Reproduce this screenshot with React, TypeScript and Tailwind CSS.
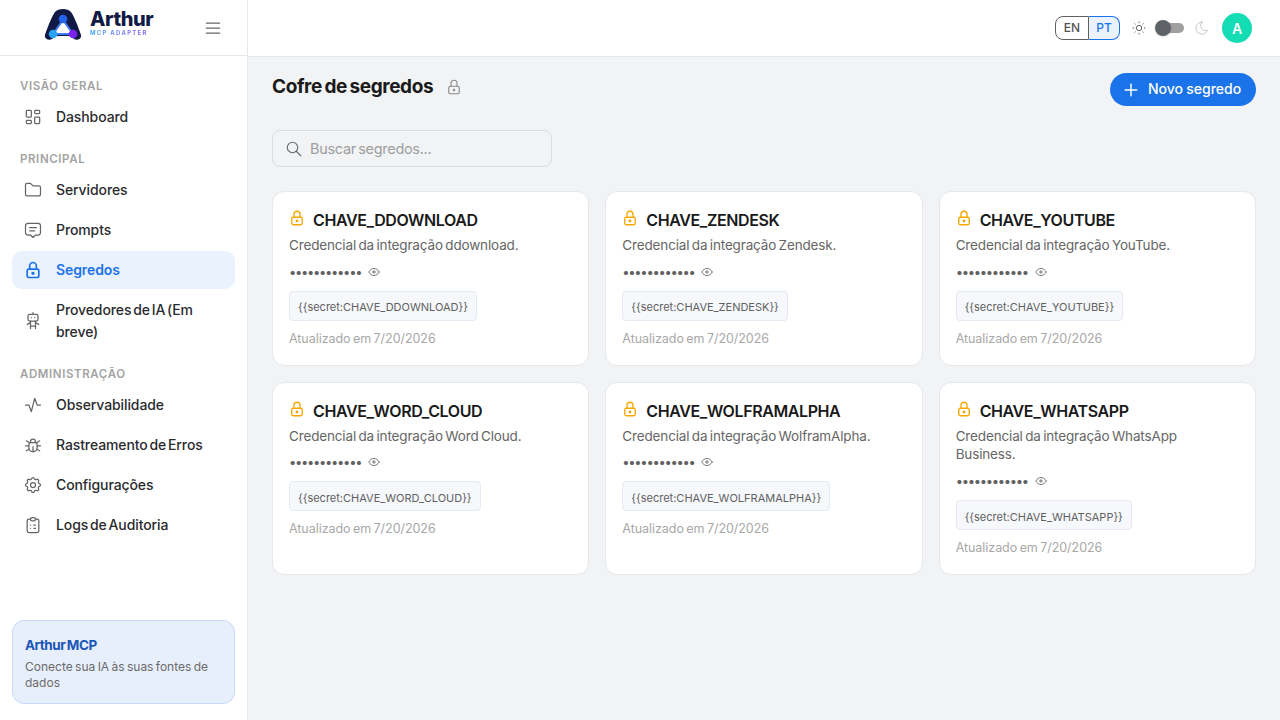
import { TbLayoutDashboard, TbFolder, TbMessage2, TbLock, TbRobot, TbActivity, TbBug, TbSettings, TbClipboardList, TbSun, TbMoon, TbEye, TbSearch, TbPlus, TbMenu2 } from "react-icons/tb";

const font = { fontFamily: "Inter, sans-serif" };

function Logo() {
  return (
    <div className="flex items-center gap-[8px]">
      <svg width="38" height="32" viewBox="0 0 38 32" className="-mt-[8px]">
        <path d="M1 27 C4 18 8 8 11 4 C14 0 24 0 27 4 C30 8 34 18 37 27 C38 31 33 33 30 31 L27 28 L11 28 L8 31 C5 33 0 31 1 27 Z" fill="#101a45" />
        <path d="M19 12 L9 26 L29 26 Z" fill="#ffffff" stroke="#3f7cf5" strokeWidth="2" strokeLinejoin="round" />
        <circle cx="19" cy="11" r="4.3" fill="#2563eb" />
        <circle cx="9" cy="26" r="4.3" fill="#2aa3f5" />
        <circle cx="29" cy="26" r="4.3" fill="#7c22f0" />
      </svg>
      <div className="flex flex-col items-start -mt-[9px]">
        <span className="text-[20px] leading-[19px] font-extrabold text-[#101a45] tracking-[-0.4px]">Arthur</span>
        <span className="text-[6px] leading-[7px] font-bold tracking-[1.25px] bg-gradient-to-r from-[#38a5f5] to-[#8b5cf6] bg-clip-text text-transparent">MCP ADAPTER</span>
      </div>
    </div>
  );
}

function SectionLabel({ children }: { children: string }) {
  return <div className="px-2 h-[22px] flex items-center text-[11.5px] font-semibold tracking-[0.6px] text-[#a3a3a3] uppercase">{children}</div>;
}

function NavItem({ icon: Icon, label, active, tall }: { icon: any; label: string; active?: boolean; tall?: boolean }) {
  return (
    <div className={`flex items-center gap-[13px] px-[12px] rounded-[10px] ${tall ? "py-[8px]" : "h-[38px]"} ${active ? "bg-[#eaf2fe] text-[#1a73e8]" : "text-[#2b2b2e]"}`}>
      <Icon strokeWidth={active ? 2 : 1.5} className={`shrink-0 w-[20px] h-[20px] -ml-[1px] ${active ? "text-[#1a73e8]" : "text-[#666666]"}`} />
      <span className={`text-[14px] leading-[22px] tracking-[-0.1px] [word-spacing:-1.8px] ${active ? "font-semibold" : "[font-weight:450]"}`}>{label}</span>
    </div>
  );
}

const cards = [
  ["CHAVE_DDOWNLOAD", "Credencial da integração ddownload."],
  ["CHAVE_ZENDESK", "Credencial da integração Zendesk."],
  ["CHAVE_YOUTUBE", "Credencial da integração YouTube."],
  ["CHAVE_WORD_CLOUD", "Credencial da integração Word Cloud."],
  ["CHAVE_WOLFRAMALPHA", "Credencial da integração WolframAlpha."],
  ["CHAVE_WHATSAPP", "Credencial da integração WhatsApp Business."],
];

function Card({ name, desc }: { name: string; desc: string }) {
  return (
    <div className="bg-white border border-[#e5e7eb] rounded-[12px] pt-[16px] px-[16px] pb-[16.6px]">
      <div className="flex items-start gap-[7px] h-[24px]">
        <TbLock strokeWidth={1.75} className="w-[18px] h-[18px] text-[#f5a700] shrink-0 mt-[1px] -ml-[1px]" />
        <span className="text-[16px] leading-[24px] font-semibold text-[#1a1a1a] tracking-[-0.4px]">{name}</span>
      </div>
      <p className="text-[13.5px] leading-[18.9px] text-[#666] mt-[4px] max-w-[270px] tracking-[-0.15px] [word-spacing:-1.2px]">{desc}</p>
      <div className="flex items-center gap-[6px] h-[18px] mt-[8px]">
        <span className="text-[13px] leading-[18px] text-[#616161] tracking-[-1.3px]">••••••••••••</span>
        <TbEye strokeWidth={1.5} className="w-[14px] h-[14px] text-[#616161]" />
      </div>
      <div className="mt-[10px] w-fit h-[30px] flex items-center px-[8px] bg-[#f6f8fc] border border-[#e5e9f2] rounded-[4px] text-[11px] text-[#616161] pt-[3px]">{`{{secret:${name}}}`}</div>
      <div className="text-[12.5px] leading-[18px] text-[#a8a8a8] mt-[9px] tracking-[-0.05px] [word-spacing:-1px]">Atualizado em 7/20/2026</div>
    </div>
  );
}

export default function App() {
  return (
    <div className="flex w-[1280px] h-[720px] overflow-hidden bg-[#f1f3f5]" style={font}>
      <aside className="w-[248px] shrink-0 bg-white border-r border-[#e5e7eb] flex flex-col">
        <div className="h-[56px] shrink-0 border-b border-[#e5e7eb] flex items-center justify-between pl-[44px] pr-[24px]">
          <Logo />
          <TbMenu2 strokeWidth={1.5} className="w-[20px] h-[20px] text-[#666]" />
        </div>
        <nav className="flex-1 px-[12px] pt-[20px] flex flex-col">
          <SectionLabel>Visão geral</SectionLabel>
          <NavItem icon={TbLayoutDashboard} label="Dashboard" />
          <div className="mt-[13px]"><SectionLabel>Principal</SectionLabel></div>
          <NavItem icon={TbFolder} label="Servidores" />
          <div className="h-[2px]" />
          <NavItem icon={TbMessage2} label="Prompts" />
          <div className="h-[2px]" />
          <NavItem icon={TbLock} label="Segredos" active />
          <div className="h-[2px]" />
          <NavItem icon={TbRobot} label="Provedores de IA (Em breve)" tall />
          <div className="mt-[13px]"><SectionLabel>Administração</SectionLabel></div>
          <NavItem icon={TbActivity} label="Observabilidade" />
          <div className="h-[2px]" />
          <NavItem icon={TbBug} label="Rastreamento de Erros" />
          <div className="h-[2px]" />
          <NavItem icon={TbSettings} label="Configurações" />
          <div className="h-[2px]" />
          <NavItem icon={TbClipboardList} label="Logs de Auditoria" />
        </nav>
        <div className="mx-[12px] mb-[16px] h-[84px] rounded-[12px] bg-[#e8effc] border border-[#c9daf8] px-[12px] pt-[14px]">
          <div className="text-[13.5px] leading-[21px] font-bold text-[#1a56b8] tracking-[-0.5px] [word-spacing:-1px]">Arthur MCP</div>
          <div className="text-[12px] leading-[16px] text-[#6b6b6b] mt-[3px] [word-spacing:-1px]">Conecte sua IA às suas fontes de dados</div>
        </div>
      </aside>
      <div className="flex-1 flex flex-col min-w-0">
        <header className="h-[57px] shrink-0 bg-white border-b border-[#e5e7eb] flex items-center justify-end pr-[28px]">
          <div className="flex h-[24px] text-[12px] font-medium">
            <div className="w-[34px] flex items-center justify-center border border-[#616161] rounded-l-[8px] text-[#555]">EN</div>
            <div className="w-[31px] flex items-center justify-center border border-[#1a73e8] border-l-0 rounded-r-[8px] bg-[#eaf2fe] text-[#1a73e8]">PT</div>
          </div>
          <TbSun strokeWidth={1.5} className="w-[16px] h-[16px] text-[#616161] ml-[11px]" />
          <div className="relative w-[28px] h-[10px] rounded-full bg-[#a0a0a0] ml-[9px]">
            <div className="absolute -left-[1px] -top-[3px] w-[16px] h-[16px] rounded-full bg-[#5f6368] shadow" />
          </div>
          <TbMoon strokeWidth={1.5} className="w-[16px] h-[16px] text-[#c8c8c8] ml-[10px]" />
          <div className="ml-[12px] w-[30px] h-[30px] rounded-full bg-[#14dcb4] text-white flex items-center justify-center text-[14px] font-semibold">A</div>
        </header>
        <main className="flex-1 px-[24px] pt-[16px]">
          <div className="flex items-start justify-between">
            <div className="flex items-center gap-[12px] h-[28px]">
              <h1 className="text-[19px] font-bold text-[#1a1a1a] tracking-[-0.4px] [word-spacing:-1.5px]">Cofre de segredos</h1>
              <TbLock strokeWidth={1.5} className="w-[18px] h-[18px] text-[#8a8a8a]" />
            </div>
            <button className="h-[33px] w-[146px] rounded-full bg-[#1a73e8] text-white flex items-center justify-start pl-[11px] gap-[7px] text-[14px] font-medium">
              <TbPlus strokeWidth={1.75} className="w-[20px] h-[20px]" />
              <span className="[word-spacing:-0.5px] -mt-[2px]">Novo segredo</span>
            </button>
          </div>
          <div className="mt-[24px] w-[280px] h-[37px] rounded-[8px] border border-[#d9dbe0] flex items-center px-[12px] gap-[7px]">
            <TbSearch strokeWidth={1.5} className="w-[18px] h-[18px] text-[#666]" />
            <span className="text-[14.5px] text-[#9e9e9e] [word-spacing:-1.5px] tracking-[-0.3px]">Buscar segredos...</span>
          </div>
          <div className="mt-[24px] grid grid-cols-3 gap-[16px] items-stretch">
            {cards.map(([n, d]) => <Card key={n} name={n} desc={d} />)}
          </div>
        </main>
      </div>
    </div>
  );
}
